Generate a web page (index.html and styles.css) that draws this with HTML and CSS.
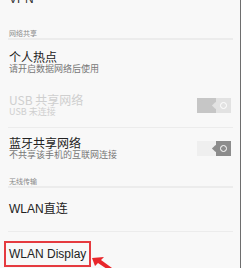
FILE: index.html
```html
<!DOCTYPE html>
<html>

<head>
    <meta charset="UTF-8">
    <title>网络共享</title>
    <link rel="stylesheet" href="styles.css">
</head>

<body>
    <div class="screen">
        <div class="list">
            <div class="vpn">VPN</div>

            <div class="header">网络共享</div>

            <div class="item first">
                <div class="text">
                    <div class="title">个人热点</div>
                    <div class="sub">请开启数据网络后使用</div>
                </div>
            </div>

            <div class="item usb">
                <div class="text">
                    <div class="title">USB 共享网络</div>
                    <div class="sub">USB 未连接</div>
                </div>
                <div class="toggle disabled"><span class="knob"></span></div>
            </div>

            <div class="item bt">
                <div class="text">
                    <div class="title">蓝牙共享网络</div>
                    <div class="sub">不共享该手机的互联网连接</div>
                </div>
                <div class="toggle"><span class="knob"></span></div>
            </div>

            <div class="header second">无线传输</div>

            <div class="item single">
                <div class="title">WLAN直连</div>
            </div>

            <div class="display">
                <div class="mark">WLAN Display</div>
            </div>
        </div>

        <svg class="arrow" width="40" height="20" viewBox="0 0 40 20">
            <polygon points="2,9 14,8 11,11 22,19 17,20 8,14 5,17" fill="#e8262b" />
        </svg>
    </div>
</body>

</html>
```

FILE: styles.css
```css
body {
    margin: 0;
    background-color: #ffffff;
    font-family: 'Noto Sans CJK SC', 'Liberation Sans', sans-serif;
}

.screen {
    position: relative;
    width: 240px;
    height: 268px;
    overflow: hidden;
    background-color: #f8f8f8;
    border-right: 1px solid #6e6e6e;
}

.list {
    padding: 0 7px 0 8px;
}

.vpn {
    margin-top: -7px;
    padding-left: 1px;
    font-family: 'Liberation Sans', sans-serif;
    font-size: 12px;
    line-height: 12px;
    color: #333;
}

.header {
    margin-top: 23px;
    padding-left: 1px;
    font-size: 7px;
    line-height: 10px;
    color: #8a8a8a;
    border-bottom: 2px solid #ececec;
}

.header.second {
    margin-top: 16px;
}

.item {
    display: flex;
    align-items: center;
    justify-content: space-between;
    padding-left: 1px;
}

.item.first {
    padding-top: 10px;
}

.item.usb {
    padding-top: 19px;
    padding-bottom: 10px;
    border-bottom: 1px solid #ececec;
}

.item.usb .title,
.item.usb .sub {
    color: #cfcfcf;
}

.item.bt {
    padding-top: 8px;
}

.item.single {
    padding-top: 14px;
    padding-bottom: 15px;
    border-bottom: 1px solid #ececec;
}

.title {
    font-size: 12px;
    line-height: 14px;
    color: #222;
}

.sub {
    font-size: 9px;
    line-height: 10px;
    color: #777;
}

.single .title,
.mark {
    font-family: 'Liberation Sans', 'Noto Sans CJK SC', sans-serif;
}

.toggle {
    display: flex;
    justify-content: flex-end;
    width: 34px;
    height: 15px;
    margin-right: 2px;
    background-color: #efefef;
}

.toggle .knob {
    position: relative;
    width: 15px;
    height: 15px;
    background-color: #8c8c8c;
}

/* little notch on the knob's left side */
.toggle .knob::before {
    content: "";
    position: absolute;
    left: -3px;
    top: 5px;
    width: 5px;
    height: 5px;
    background-color: #8c8c8c;
    transform: rotate(45deg);
}

.toggle .knob::after {
    content: "";
    position: absolute;
    left: 4px;
    top: 4px;
    width: 5px;
    height: 5px;
    border: 1px solid #fff;
    border-radius: 50%;
}

.toggle.disabled {
    background-color: #c6c6c6;
}

.toggle.disabled .knob,
.toggle.disabled .knob::before {
    background-color: #e2e2e2;
}

.display {
    padding-top: 7px;
    margin-left: -4px;
}

.mark {
    display: inline-block;
    width: 80px;
    height: 22px;
    padding-left: 3px;
    border: 2px solid #e53a3f;
    font-size: 12px;
    line-height: 22px;
    color: #222;
}

.arrow {
    position: absolute;
    left: 90px;
    top: 249px;
}
```
